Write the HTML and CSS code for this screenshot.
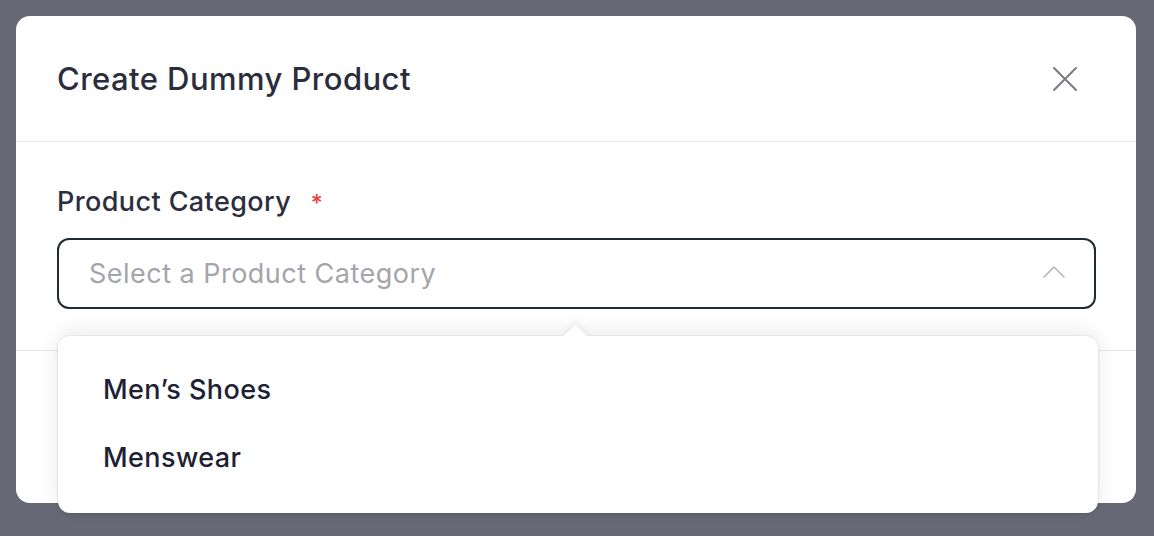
FILE: index.html
```html
<!DOCTYPE html>
<html lang="en">
<head>
<meta charset="utf-8">
<title>Create Dummy Product</title>
<link rel="stylesheet" href="styles.css">
</head>
<body>
<div class="modal">
  <div class="modal-header">
    <h2 class="modal-title">Create Dummy Product</h2>
    <button class="close-btn" aria-label="Close">
      <svg width="26" height="26" viewBox="0 0 26 26" fill="none" stroke="#7a7b80" stroke-width="2" stroke-linecap="round">
        <path d="M2 2 L24 24 M24 2 L2 24"/>
      </svg>
    </button>
  </div>
  <div class="modal-body">
    <label class="field-label">Product Category <span class="required">*</span></label>
    <div class="select">
      <span class="placeholder">Select a Product Category</span>
      <svg class="chevron" width="24" height="13" viewBox="0 0 24 13" fill="none" stroke="#b4b5b9" stroke-width="1.6" stroke-linecap="round" stroke-linejoin="round">
        <path d="M2 12 L12 2 L22 12"/>
      </svg>
    </div>
  </div>
  <div class="modal-footer"></div>
  <div class="dropdown">
    <div class="dropdown-item">Men’s Shoes</div>
    <div class="dropdown-item">Menswear</div>
  </div>
</div>
</body>
</html>
```

FILE: styles.css
```css
* { box-sizing: border-box; }
html, body { margin: 0; }
body {
  background: #676a76;
  padding: 16px;
  font-family: Inter, "Noto Sans", "Liberation Sans", sans-serif;
  height: 536px;
  overflow: hidden;
}
.modal {
  position: relative;
  width: 1120px;
  height: 487px;
  background: #ffffff;
  border-radius: 14px;
  display: flex;
  flex-direction: column;
}
.modal-header {
  height: 126px;
  padding: 0 58px 0 41px;
  display: flex;
  align-items: center;
  justify-content: space-between;
  border-bottom: 1px solid #e6e7ea;
}
.modal-title {
  margin: 0;
  font-size: 31px;
  font-weight: 500;
  color: #2a2d3d;
  letter-spacing: 0.45px;
}
.close-btn {
  border: 0;
  background: none;
  padding: 0;
  display: flex;
  cursor: pointer;
}
.modal-body {
  padding: 44px 40px 41px 41px;
  border-bottom: 1px solid #e6e7ea;
}
.field-label {
  display: block;
  font-size: 27px;
  line-height: 32px;
  font-weight: 500;
  color: #2b2e3d;
  letter-spacing: 0.4px;
  margin-bottom: 19px;
}
.required {
  color: #e5443f;
  margin-left: 12px;
  font-size: 23px;
}
.select {
  height: 71px;
  border: 2px solid #232a33;
  border-radius: 12px;
  padding: 0 28px 0 30px;
  display: flex;
  align-items: center;
  justify-content: space-between;
}
.placeholder {
  font-size: 27px;
  color: #a4a5aa;
  letter-spacing: 0.48px;
}
.chevron { margin-top: -4px; }
.modal-footer { flex: 1; }
.dropdown {
  position: absolute;
  left: 42px;
  top: 320px;
  width: 1040px;
  height: 177px;
  background: #ffffff;
  border-radius: 12px;
  padding: 19px 0 22px;
  box-shadow: 0 0 0 1px rgba(0, 0, 0, 0.04), 0 -4px 22px rgba(0, 0, 0, 0.09), 0 2px 4px rgba(0, 0, 0, 0.06);
}
.dropdown::before {
  content: "";
  position: absolute;
  left: 509px;
  top: -8px;
  width: 17px;
  height: 17px;
  background: #ffffff;
  transform: rotate(45deg);
  box-shadow: -3px -3px 6px rgba(0, 0, 0, 0.05);
}
.dropdown-item {
  position: relative;
  height: 68px;
  padding-left: 45px;
  display: flex;
  align-items: center;
  font-size: 27px;
  font-weight: 500;
  color: #1e2133;
  letter-spacing: 0.42px;
}
```
